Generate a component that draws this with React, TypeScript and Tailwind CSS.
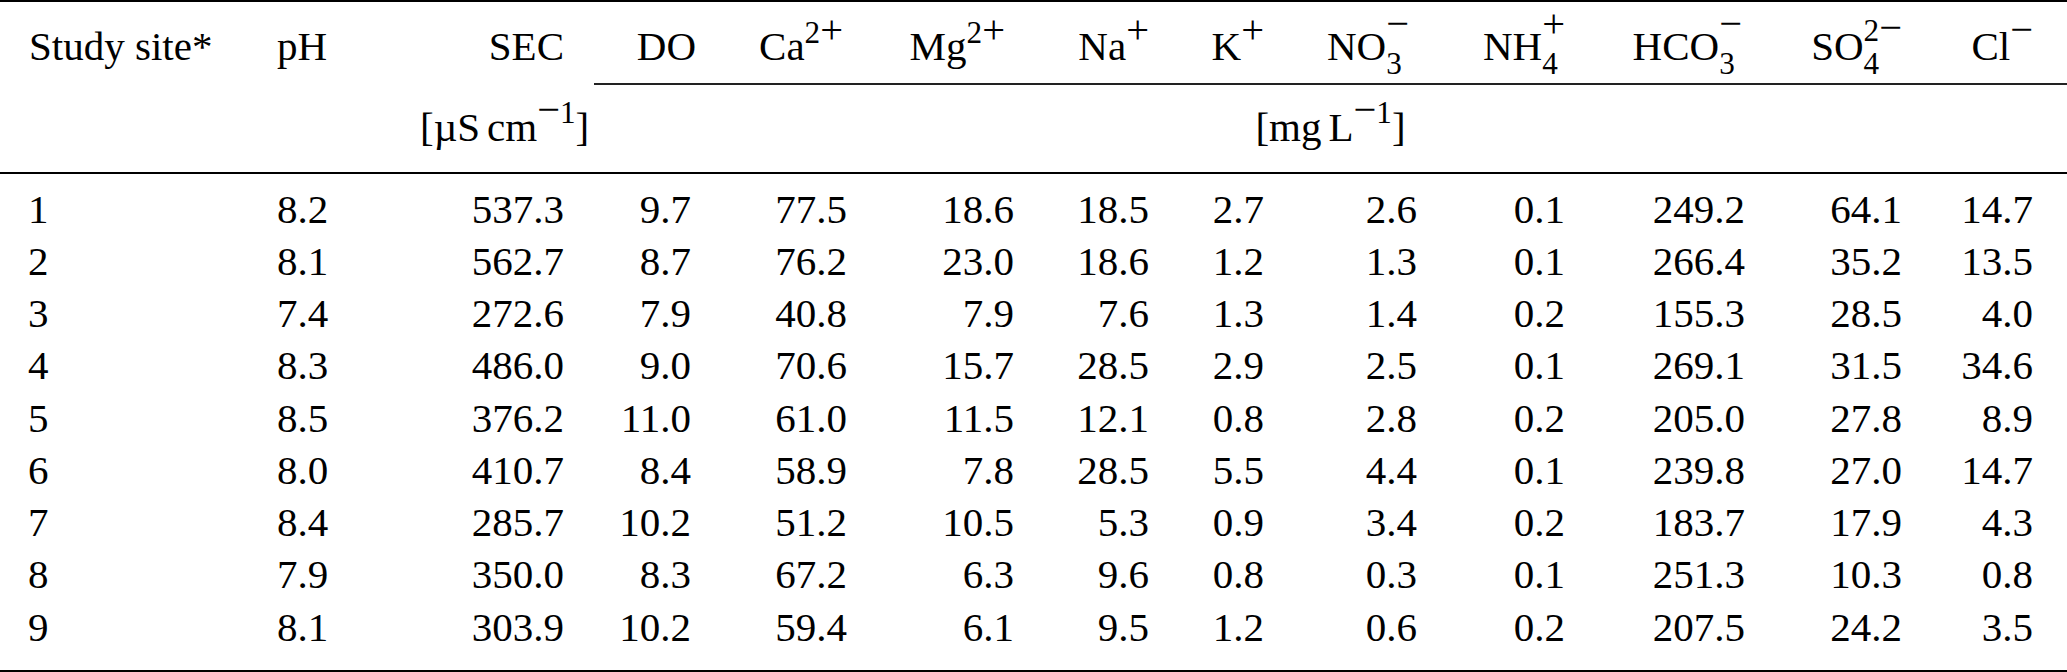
import React from 'react';

const rows: string[][] = [
  ['1', '8.2', '537.3', '9.7', '77.5', '18.6', '18.5', '2.7', '2.6', '0.1', '249.2', '64.1', '14.7'],
  ['2', '8.1', '562.7', '8.7', '76.2', '23.0', '18.6', '1.2', '1.3', '0.1', '266.4', '35.2', '13.5'],
  ['3', '7.4', '272.6', '7.9', '40.8', '7.9', '7.6', '1.3', '1.4', '0.2', '155.3', '28.5', '4.0'],
  ['4', '8.3', '486.0', '9.0', '70.6', '15.7', '28.5', '2.9', '2.5', '0.1', '269.1', '31.5', '34.6'],
  ['5', '8.5', '376.2', '11.0', '61.0', '11.5', '12.1', '0.8', '2.8', '0.2', '205.0', '27.8', '8.9'],
  ['6', '8.0', '410.7', '8.4', '58.9', '7.8', '28.5', '5.5', '4.4', '0.1', '239.8', '27.0', '14.7'],
  ['7', '8.4', '285.7', '10.2', '51.2', '10.5', '5.3', '0.9', '3.4', '0.2', '183.7', '17.9', '4.3'],
  ['8', '7.9', '350.0', '8.3', '67.2', '6.3', '9.6', '0.8', '0.3', '0.1', '251.3', '10.3', '0.8'],
  ['9', '8.1', '303.9', '10.2', '59.4', '6.1', '9.5', '1.2', '0.6', '0.2', '207.5', '24.2', '3.5'],
];

// column widths: site, pH, SEC, DO, Ca, Mg, Na, K, NO3, NH4, HCO3, SO4, Cl, right margin
const grid =
  'grid grid-cols-[250px_170px_144px_127px_156px_167px_135px_115px_153px_148px_180px_157px_131px_34px]';

// + and − are set larger, like the math signs in the original
const Sign: React.FC<{ c: string }> = ({ c }) => <span className="text-[1.3em]">{c}</span>;

const Sup: React.FC<{ children: React.ReactNode }> = ({ children }) => (
  <sup className="text-[0.76em] top-[-0.55em]">{children}</sup>
);

// stacked subscript + superscript, as TeX sets them
const SubSup: React.FC<{ sub: string; children: React.ReactNode; high?: boolean }> = ({
  sub,
  children,
  high,
}) => (
  <>
    <sub className="text-[0.76em] bottom-[-0.46em]">{sub}</sub>
    <sup className={`text-[0.76em] ml-[-0.5em] ${high ? 'top-[-0.74em]' : 'top-[-0.6em]'}`}>
      {children}
    </sup>
  </>
);

const Rule: React.FC<{ thin?: boolean }> = ({ thin }) => (
  <div className={thin ? 'h-[1.5px] bg-[#222]' : 'h-[2px] bg-black'} />
);

const App: React.FC = () => {
  return (
    <div className="w-[2067px] h-[672px] bg-white text-black font-['Liberation_Serif','Times_New_Roman',serif] text-[41px] overflow-hidden">
      <Rule />

      {/* header line 1 */}
      <div className={`${grid} h-[81px] pt-[18px] leading-[52px]`}>
        <div className="pl-[29px]">Study site*</div>
        <div className="pl-[27px]">pH</div>
        <div className="text-right">SEC</div>
        <div className="text-right mr-[-5px]">DO</div>
        <div className="text-right pr-[4px]">
          Ca
          <Sup>
            2<Sign c="+" />
          </Sup>
        </div>
        <div className="text-right pr-[9px]">
          Mg
          <Sup>
            2<Sign c="+" />
          </Sup>
        </div>
        <div className="text-right">
          Na
          <Sup>
            <Sign c="+" />
          </Sup>
        </div>
        <div className="text-right">
          K
          <Sup>
            <Sign c="+" />
          </Sup>
        </div>
        <div className="text-right pr-[8px]">
          NO
          <SubSup sub="3" high>
            <Sign c="−" />
          </SubSup>
        </div>
        <div className="text-right">
          NH
          <SubSup sub="4" high>
            <Sign c="+" />
          </SubSup>
        </div>
        <div className="text-right pr-[3px]">
          HCO
          <SubSup sub="3" high>
            <Sign c="−" />
          </SubSup>
        </div>
        <div className="text-right">
          SO
          <SubSup sub="4">
            2<Sign c="−" />
          </SubSup>
        </div>
        <div className="text-right">
          Cl
          <Sup>
            <Sign c="−" />
          </Sup>
        </div>
        <div />
      </div>

      <div className={grid}>
        <div className="col-start-4 col-span-11 ml-[30px]">
          <Rule thin />
        </div>
      </div>

      {/* header line 2: units */}
      <div className={`${grid} h-[87px] pt-[16px] leading-[52px]`}>
        <div className="col-start-3 text-right whitespace-nowrap">
          [µS<span className="ml-[0.17em]">cm</span>
          <Sup>
            <Sign c="−" />1
          </Sup>
          ]
        </div>
        <div className="col-start-4 col-span-11 ml-[30px] text-center">
          [mg<span className="ml-[0.17em]">L</span>
          <Sup>
            <Sign c="−" />1
          </Sup>
          ]
        </div>
      </div>

      <Rule />

      {/* data */}
      <div className="pt-[9px] pb-[17px] leading-[52.25px]">
        {rows.map((r) => (
          <div key={r[0]} className={grid}>
            <div className="pl-[28px]">{r[0]}</div>
            <div className="pl-[27px]">{r[1]}</div>
            {r.slice(2).map((v, i) => (
              <div key={i} className="text-right">
                {v}
              </div>
            ))}
            <div />
          </div>
        ))}
      </div>

      <Rule />
    </div>
  );
};

export default App;
